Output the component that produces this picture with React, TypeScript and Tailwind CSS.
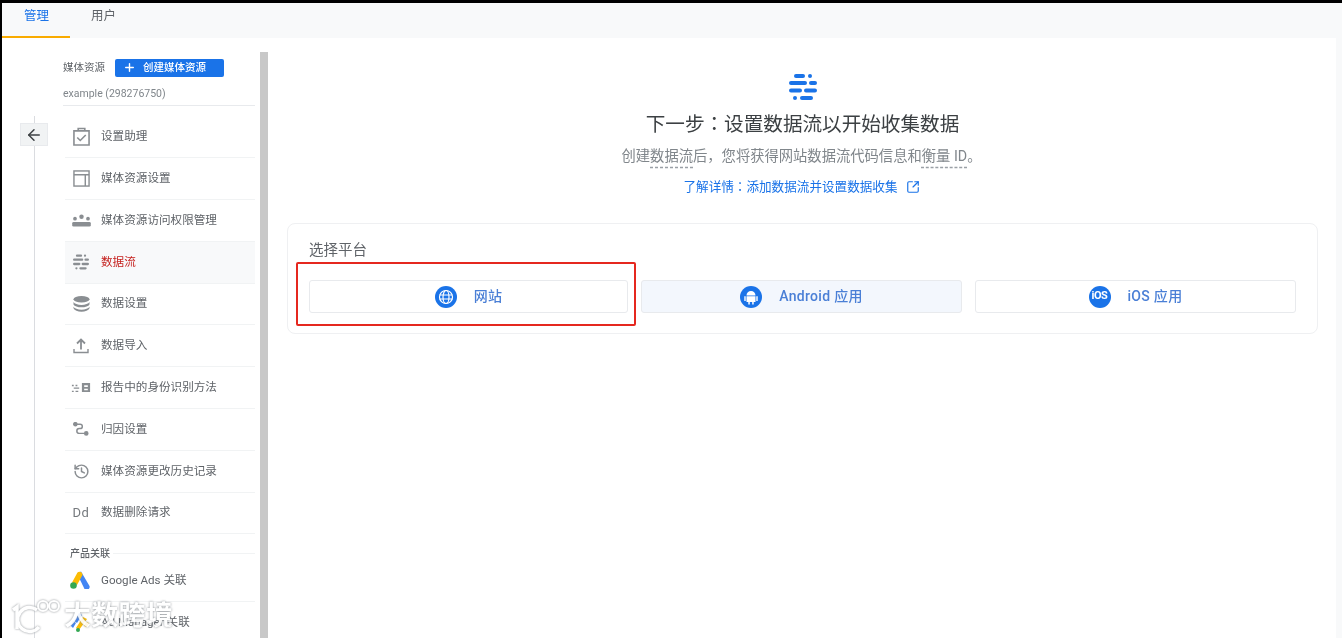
import { ArrowLeft, Plus, SquareArrowOutUpRight, History } from "lucide-react";

const sans = "font-['Roboto','Noto_Sans_CJK_SC',sans-serif]";
const sansKr = "font-['Roboto','Noto_Sans_CJK_KR',sans-serif]";

function Dashed({ children }: { children: string }) {
  return <span className="underline decoration-dashed decoration-[#9aa0a6] underline-offset-[6px]">{children}</span>;
}

function StreamIcon({ className }: { className: string }) {
  return (
    <svg viewBox="0 0 28 28" className={className} fill="currentColor">
      <rect x="5" y="1" width="11" height="4" rx="2" />
      <circle cx="21" cy="3" r="2" />
      <rect x="0" y="8" width="18" height="4" rx="2" />
      <rect x="20" y="8" width="8" height="4" rx="2" />
      <rect x="0" y="15.500" width="13" height="4" rx="2" />
      <rect x="15" y="15.500" width="13" height="4" rx="2" />
      <circle cx="6" cy="25" r="2" />
      <rect x="11" y="23" width="13" height="4" rx="2" />
    </svg>
  );
}

const rows = [
  {
    label: "设置助理",
    icon: (
      <svg viewBox="0 0 18 20" className="w-[17px] h-[19px]" fill="none" stroke="currentColor" strokeWidth="1.700">
        <path d="M1 4h16v15H1z" />
        <path d="M5.500 4V1.500h7V4" />
        <path d="m4.500 11 3.200 3.200 5.800-5.800" />
      </svg>
    ),
  },
  {
    label: "媒体资源设置",
    icon: (
      <svg viewBox="0 0 18 18" className="size-[17px]" fill="none" stroke="currentColor" strokeWidth="1.500">
        <rect x="1" y="1" width="16" height="16" />
        <path d="M1 5h16M13 5v12" />
      </svg>
    ),
  },
  {
    label: "媒体资源访问权限管理",
    icon: (
      <svg viewBox="0 0 22 14" className="w-[21px] h-[13px]" fill="currentColor">
        <circle cx="4" cy="5" r="2" />
        <circle cx="11" cy="3" r="2.400" />
        <circle cx="18" cy="5" r="2" />
        <rect x="1" y="8.500" width="20" height="5" rx="1.500" />
      </svg>
    ),
  },
  { label: "数据流", active: true, icon: <StreamIcon className="size-[16px]" /> },
  {
    label: "数据设置",
    icon: (
      <svg viewBox="0 0 18 17" className="w-[17px] h-[16px]" fill="currentColor">
        <ellipse cx="9" cy="3.500" rx="8.500" ry="3.500" />
        <path d="M0.500 6.500c1 2 4.500 3 8.500 3s7.500-1 8.500-3V9c-1 2-4.500 3-8.500 3S1.500 11 0.500 9z" />
        <path d="M0.500 11.500c1 2 4.500 3 8.500 3s7.500-1 8.500-3V13c-1 2.500-4.500 3.700-8.500 3.700S1.500 15.500 0.500 13z" />
      </svg>
    ),
  },
  {
    label: "数据导入",
    icon: (
      <svg viewBox="0 0 16 16" className="size-[16px]" fill="none" stroke="currentColor" strokeWidth="1.800">
        <path d="M8 11.500V2M4 5.500l4-4 4 4" />
        <path d="M1 11v3.500h14V11" strokeWidth="1.400" />
      </svg>
    ),
  },
  {
    label: "报告中的身份识别方法",
    icon: (
      <svg viewBox="0 0 22 12" className="w-[20px] h-[11px]" fill="currentColor">
        <path d="M1 3h2v1.500H1zM5 3h2v1.500H5zM3 6h6v1.500H3zM1 9.500h2V11H1zM5 9.500h3V11H5z" />
        <path fillRule="evenodd" d="M12 1h9v10h-9zM14.500 3.500v2h4v-2zM14.500 7.500v1.500h4V7.500z" />
      </svg>
    ),
  },
  {
    label: "归因设置",
    icon: (
      <svg viewBox="0 0 18 16" className="w-[16px] h-[14px]" fill="none" stroke="currentColor" strokeWidth="1.700">
        <circle cx="2.500" cy="2.500" r="1.800" fill="currentColor" />
        <circle cx="15" cy="13" r="1.800" fill="currentColor" />
        <path d="M4 2.500h4a2.500 2.500 0 0 1 0 5H7a2.700 2.700 0 0 0 0 5.500h6.500" />
      </svg>
    ),
  },
  { label: "媒体资源更改历史记录", icon: <History className="size-[17px]" strokeWidth={2.100} /> },
  { label: "数据删除请求", icon: <span className="text-[13px] tracking-[0.5px] text-[#75797d]">Dd</span> },
];

function GoogleAdsLogo() {
  return (
    <svg viewBox="0 0 20 18" className="w-[20px] h-[18px]">
      <path d="M7 2.500 11 0.500 19.500 15a3 3 0 0 1-5 3z" fill="#4285f4" />
      <path d="M7.500 1.500a3 3 0 0 1 5 2.500L7 14l-5-2.500z" fill="#fbbc04" />
      <circle cx="3.500" cy="14.500" r="3.300" fill="#34a853" />
    </svg>
  );
}

function AdManagerLogo() {
  return (
    <svg viewBox="0 0 20 20" className="size-[20px]">
      <path d="M9 1 12 3 7 11 4 9z" fill="#4285f4" />
      <path d="M3 9 6 11 3 16 1 14z" fill="#4285f4" />
      <path d="M13 5 17 7 9 18 6 16z" fill="#fbbc04" />
      <path d="M16 10 19 11 17 15 14 14z" fill="#fbbc04" />
      <circle cx="8" cy="18" r="2" fill="#34a853" />
    </svg>
  );
}

function Sidebar() {
  return (
    <aside className="w-[267px] shrink-0 flex relative">
      <div className="w-[61px] shrink-0 relative">
        <div className="absolute left-[32px] top-[78px] bottom-0 w-px bg-[#dadce0]" />
        <button className="absolute left-[18px] top-[85px] w-[28px] h-[23px] bg-[#f1f3f4] border border-[#e8eaed] flex items-center justify-center text-[#3c4043]">
          <ArrowLeft className="size-[18px]" strokeWidth={2} />
        </button>
      </div>
      <div className="w-[192px] shrink-0 pt-[20px]">
        <div className="flex items-center h-[19px] text-[10.500px] text-[#5f6368]">
          媒体资源
          <span className="ml-[10px] w-[109px] h-[18px] rounded-[2px] bg-[#1a73e8] text-white flex items-center font-medium text-[10.500px] pl-[8px] gap-[7px]">
            <Plus className="size-[13px]" strokeWidth={2.600} />
            创建媒体资源
          </span>
        </div>
        <div className="h-[29px] pt-[6px] flex items-center text-[10.500px] text-[#80868b] border-b border-[#e8eaed]">
          example (298276750)
        </div>
        <ul className="pl-[2px] mt-[10.500px]">
          {rows.map((r) => (
            <li
              key={r.label}
              className={`h-[41.800px] flex items-center border-b border-[#f1f3f4] ${r.active ? "bg-[#f8f9fa]" : ""}`}
            >
              <span className="w-[36px] flex items-center justify-center text-[#8a8e92] pr-[4px]">{r.icon}</span>
              <span className={`text-[11.600px] ${r.active ? "text-[#c5221f]" : "text-[#5f6368]"}`}>{r.label}</span>
            </li>
          ))}
        </ul>
        <div className="h-[19px] mt-[10px] flex items-center gap-[3px] text-[10px] font-medium text-[#5f6368] pl-[7px]">
          产品关联
          <span className="flex-1 h-px bg-[#f1f3f4]" />
        </div>
        <ul className="pl-[2px]">
          <li className="h-[39px] pb-[4px] flex items-center border-b border-[#f1f3f4]">
            <span className="w-[36px] flex justify-center pr-[6px]"><GoogleAdsLogo /></span>
            <span className="text-[11.600px] text-[#5f6368]">Google Ads 关联</span>
          </li>
          <li className="h-[40px] flex items-center">
            <span className="w-[36px] flex justify-center pr-[6px]"><AdManagerLogo /></span>
            <span className="text-[11.600px] text-[#5f6368]">Ad Manager 关联</span>
          </li>
        </ul>
      </div>
      <div className="w-[8px] ml-[5px] mt-[14px] bg-[#c8c8c8]" />
    </aside>
  );
}

function PlatformButton({ label, icon, hover }: { label: string; icon: React.ReactNode; hover?: boolean }) {
  return (
    <button
      className={`flex-1 basis-0 h-[33px] rounded-[3px] border border-[#e8eaed] flex items-center justify-center gap-[17px] text-[14px] tracking-[0.3px] font-medium text-[#4a7fd6] ${hover ? "bg-[#f3f7fd]" : "bg-white"}`}
    >
      {icon}
      {label}
    </button>
  );
}

function Main() {
  return (
    <main className="flex-1 min-w-0 pr-[6px] bg-[#f8f9fa] flex">
      <div className="flex-1 bg-white px-[18px] pt-[35px]">
        <div className={`flex flex-col items-center ${sansKr}`}>
          <StreamIcon className="size-[28px] text-[#1a73e8]" />
          <h1 className="mt-[9px] text-[19.600px] leading-[30px] text-[#3c4043]">下一步：设置数据流以开始收集数据</h1>
          <p className="mt-[6px] text-[14.300px] leading-[20px] text-[#80868b] -translate-x-[1px]">
            创建<Dashed>数据流</Dashed>后，您将获得网站数据流代码信息和<Dashed>衡量 ID</Dashed>。
          </p>
          <a className="mt-[12px] text-[12.600px] leading-[18px] text-[#1a73e8] flex items-center gap-[8px] -translate-x-[1px]">
            了解详情：添加数据流并设置数据收集
            <SquareArrowOutUpRight className="size-[14px]" strokeWidth={2} />
          </a>
        </div>
        <section className="mt-[27px] h-[111px] rounded-[8px] border border-[#eff0f2] px-[21px] pt-[17px]">
          <h2 className="text-[14.500px] leading-[20px] text-[#5f6368]">选择平台</h2>
          <div className="mt-[19px] flex gap-[13px]">
            <div className="flex-1 basis-0 relative flex">
              <PlatformButton
                label="网站"
                icon={
                  <svg viewBox="0 0 22 22" className="size-[22px]">
                    <circle cx="11" cy="11" r="11" fill="#1a73e8" />
                    <g fill="none" stroke="#fff" strokeWidth="1.200">
                      <circle cx="11" cy="11" r="6.500" />
                      <ellipse cx="11" cy="11" rx="3" ry="6.500" />
                      <path d="M4.500 9h13M4.500 13h13" />
                    </g>
                  </svg>
                }
              />
              <div className="absolute -left-[13px] -right-[8px] -top-[18px] -bottom-[13px] border-2 border-[#e5281f] rounded-[2px]" />
            </div>
            <PlatformButton
              hover
              label="Android 应用"
              icon={
                <svg viewBox="0 0 22 22" className="size-[22px]">
                  <circle cx="11" cy="11" r="11" fill="#1a73e8" />
                  <path d="M6.500 9.500a4.500 4.500 0 0 1 9 0zM6.500 10.300h9V16h-1.800v2.500h-1.500V16h-2.400v2.500H8.300V16H6.500zM4.300 10.300h1.400v4.700H4.300zM16.300 10.300h1.400v4.700h-1.400z" fill="#fff" />
                </svg>
              }
            />
            <PlatformButton
              label="iOS 应用"
              icon={
                <span className="size-[22px] rounded-full bg-[#1a73e8] text-white text-[11px] tracking-[-0.5px] font-bold flex items-center justify-center">iOS</span>
              }
            />
          </div>
        </section>
      </div>
    </main>
  );
}

export default function App() {
  return (
    <div className={`w-[1342px] h-[638px] overflow-hidden relative bg-white border-t-[3px] border-l-2 border-black flex flex-col blur-[0.5px] ${sans}`}>
      <nav className="h-[35px] shrink-0 bg-[#f8f9fa] flex text-[12.500px]">
        <div className="w-[68px] h-[35px] border-b-2 border-[#f9ab00] text-[#1a73e8] pl-[22px] pt-[4px]">管理</div>
        <div className="text-[#5f6368] pl-[21px] pt-[4px]">用户</div>
      </nav>
      <div className="flex flex-1 min-h-0">
        <Sidebar />
        <Main />
      </div>
      <div className="absolute left-[6px] bottom-[2px] flex items-center text-white text-[27px] font-bold opacity-90 drop-shadow-[0_0_1px_#80868b]">
        <svg viewBox="0 0 54 36" className="w-[54px] h-[36px]" fill="none" stroke="#fff" strokeWidth="3.500">
          <path d="M5 12 9 9v22" />
          <path d="M29 12a12 12 0 1 0 2 17" />
          <circle cx="35" cy="8" r="5" strokeWidth="2" />
          <circle cx="46" cy="8" r="5" strokeWidth="2" />
        </svg>
        <span className="ml-[2px] tracking-[0.300px]">大数跨境</span>
      </div>
    </div>
  );
}
